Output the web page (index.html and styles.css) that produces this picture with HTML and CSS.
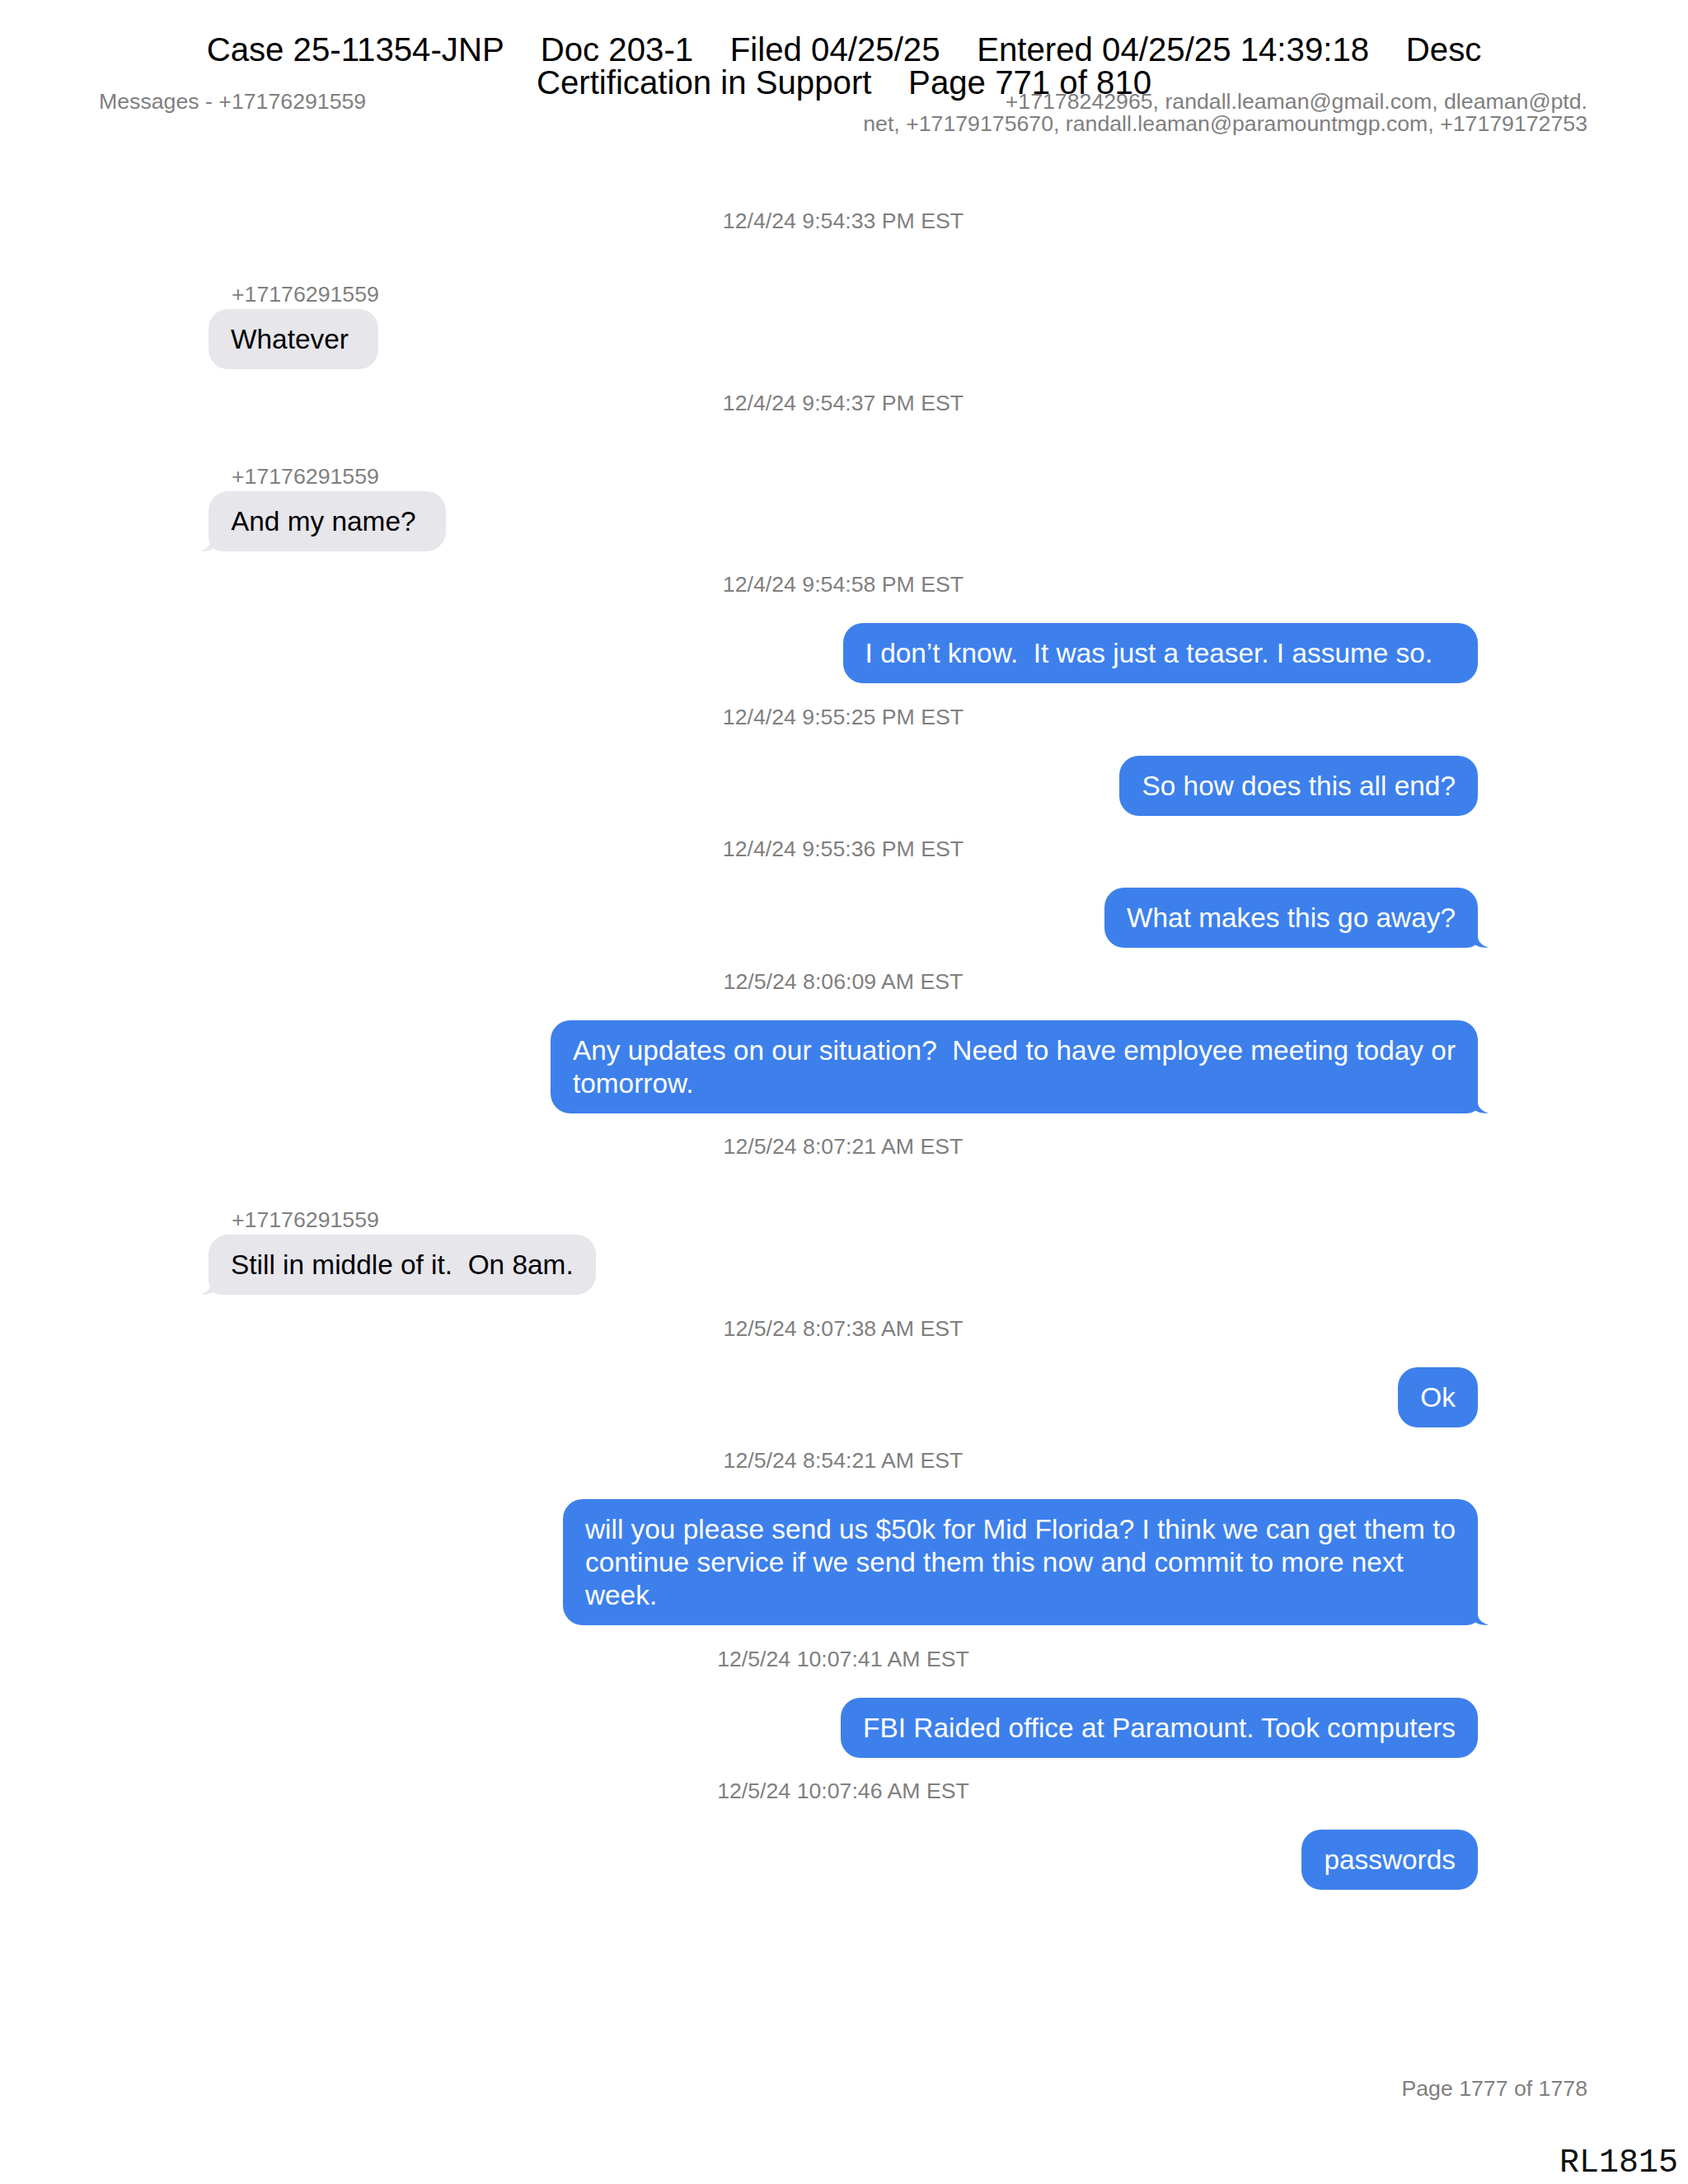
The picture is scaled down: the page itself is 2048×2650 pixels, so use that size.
FILE: index.html
```html
<!DOCTYPE html>
<html lang="en">
<head>
<meta charset="utf-8">
<title>Messages - +17176291559</title>
<link rel="stylesheet" href="styles.css">
</head>
<body>
<div class="page">
  <div class="stamp">
    <div class="stamp-line">Case 25-11354-JNP    Doc 203-1    Filed 04/25/25    Entered 04/25/25 14:39:18    Desc</div>
    <div class="stamp-line">Certification in Support    Page 771 of 810</div>
  </div>

  <header class="topbar">
    <div class="topbar-title">Messages - +17176291559</div>
    <div class="topbar-parts">+17178242965, randall.leaman@gmail.com, dleaman@ptd.<br>net, +17179175670, randall.leaman@paramountmgp.com, +17179172753</div>
  </header>

  <main class="thread">
    <div class="ts">12/4/24 9:54:33 PM EST</div>
    <div class="msg recv">
      <div class="sender">+17176291559</div>
      <div class="bubble">Whatever&nbsp;</div>
    </div>

    <div class="ts">12/4/24 9:54:37 PM EST</div>
    <div class="msg recv">
      <div class="sender">+17176291559</div>
      <div class="bubble tailed">And my name?&nbsp;<svg class="tail tail-left" viewBox="0 0 40 26" aria-hidden="true"><path d="M0 0 H27 V12 C27 18 31 23 40 25.5 C34 26.5 28 25 24 22.5 C21 25 17 26 12 26 H0 Z"/></svg></div>
    </div>

    <div class="ts">12/4/24 9:54:58 PM EST</div>
    <div class="msg sent">
      <div class="bubble">I don’t know.  It was just a teaser. I assume so.&nbsp;&nbsp;&nbsp;</div>
    </div>

    <div class="ts">12/4/24 9:55:25 PM EST</div>
    <div class="msg sent">
      <div class="bubble">So how does this all end?</div>
    </div>

    <div class="ts">12/4/24 9:55:36 PM EST</div>
    <div class="msg sent">
      <div class="bubble tailed">What makes this go away?<svg class="tail tail-right" viewBox="0 0 40 26" aria-hidden="true"><path d="M0 0 H27 V12 C27 18 31 23 40 25.5 C34 26.5 28 25 24 22.5 C21 25 17 26 12 26 H0 Z"/></svg></div>
    </div>

    <div class="ts">12/5/24 8:06:09 AM EST</div>
    <div class="msg sent">
      <div class="bubble tailed">Any updates on our situation?  Need to have employee meeting today or<br>tomorrow.<svg class="tail tail-right" viewBox="0 0 40 26" aria-hidden="true"><path d="M0 0 H27 V12 C27 18 31 23 40 25.5 C34 26.5 28 25 24 22.5 C21 25 17 26 12 26 H0 Z"/></svg></div>
    </div>

    <div class="ts">12/5/24 8:07:21 AM EST</div>
    <div class="msg recv">
      <div class="sender">+17176291559</div>
      <div class="bubble tailed">Still in middle of it.  On 8am.<svg class="tail tail-left" viewBox="0 0 40 26" aria-hidden="true"><path d="M0 0 H27 V12 C27 18 31 23 40 25.5 C34 26.5 28 25 24 22.5 C21 25 17 26 12 26 H0 Z"/></svg></div>
    </div>

    <div class="ts">12/5/24 8:07:38 AM EST</div>
    <div class="msg sent">
      <div class="bubble">Ok</div>
    </div>

    <div class="ts">12/5/24 8:54:21 AM EST</div>
    <div class="msg sent">
      <div class="bubble tailed">will you please send us $50k for Mid Florida? I think we can get them to<br>continue service if we send them this now and commit to more next<br>week.<svg class="tail tail-right" viewBox="0 0 40 26" aria-hidden="true"><path d="M0 0 H27 V12 C27 18 31 23 40 25.5 C34 26.5 28 25 24 22.5 C21 25 17 26 12 26 H0 Z"/></svg></div>
    </div>

    <div class="ts">12/5/24 10:07:41 AM EST</div>
    <div class="msg sent">
      <div class="bubble">FBI Raided office at Paramount. Took computers</div>
    </div>

    <div class="ts">12/5/24 10:07:46 AM EST</div>
    <div class="msg sent">
      <div class="bubble">passwords</div>
    </div>
  </main>

  <footer class="footer">
    <div class="page-count">Page 1777 of 1778</div>
    <div class="bates">RL1815</div>
  </footer>
</div>
</body>
</html>
```

FILE: styles.css
```css
html, body {
  margin: 0;
  padding: 0;
  background: #ffffff;
}

body {
  font-family: "Liberation Sans", Arial, sans-serif;
  color: #000000;
}

.page {
  position: relative;
  width: 2048px;
  min-height: 2650px;
}

/* court filing stamp overlays the page header */
.stamp {
  position: absolute;
  top: 41px;
  left: 0;
  right: 0;
  text-align: center;
  font-size: 40.2px;
  line-height: 40px;
  color: #000;
  z-index: 2;
}

.stamp-line {
  white-space: pre;
}

.topbar {
  display: flex;
  justify-content: space-between;
  align-items: flex-start;
  padding: 110px 122px 0 120px;
  font-size: 26.7px;
  line-height: 27px;
  color: #7f7f7f;
}

.topbar-parts {
  text-align: right;
}

.thread {
  display: flex;
  flex-direction: column;
  padding: 88px 255px 0 253px;
}

.ts {
  align-self: stretch;
  text-align: center;
  font-size: 26.7px;
  line-height: 32px;
  color: #7f7f7f;
}

.msg {
  display: flex;
  flex-direction: column;
  margin-bottom: 24.5px;
}

.msg.sent {
  align-self: flex-end;
  align-items: flex-end;
  margin-top: 31px;
}

.msg.recv {
  align-self: flex-start;
  align-items: flex-start;
  margin-top: 57px;
}

.sender {
  font-size: 26.7px;
  line-height: 32px;
  color: #7f7f7f;
  padding-left: 28px;
  margin-bottom: 2px;
}

.bubble {
  position: relative;
  font-size: 33.4px;
  line-height: 40px;
  padding: 17px 27px 16px;
  border-radius: 24px;
  white-space: pre-wrap;
  max-width: 1200px;
}

.sent .bubble {
  background: #3d80ec;
  color: #ffffff;
}

.recv .bubble {
  background: #e6e6eb;
  color: #000000;
}

.sent .bubble.tailed {
  border-bottom-right-radius: 18px;
}

.recv .bubble.tailed {
  border-bottom-left-radius: 18px;
}

.tail {
  position: absolute;
  bottom: 0;
  width: 40px;
  height: 26px;
}

.tail-right {
  right: -13px;
  fill: #3d80ec;
}

.tail-left {
  left: -10px;
  fill: #e6e6eb;
  transform: scaleX(-1);
}

.footer {
  display: flex;
  flex-direction: column;
  align-items: flex-end;
  padding-top: 200px;
}

.page-count {
  font-size: 26.7px;
  line-height: 32px;
  color: #7f7f7f;
  padding-right: 122px;
}

.bates {
  font-family: "Liberation Mono", "Courier New", monospace;
  font-size: 40px;
  line-height: 40px;
  color: #111;
  margin-top: 55px;
  padding-right: 12px;
}
```
